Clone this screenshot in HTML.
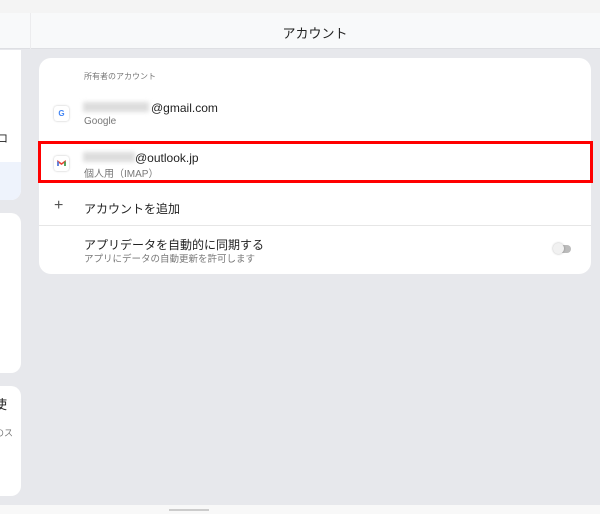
<!DOCTYPE html>
<html><head><meta charset="utf-8"><style>
*{margin:0;padding:0;box-sizing:border-box}
body{width:600px;height:514px;overflow:hidden;background:#e7e8ec;font-family:"Liberation Sans","Noto Sans CJK JP",sans-serif;position:relative}
.abs{position:absolute}
.t{color:#222}
.s{color:#777}
</style></head><body>
<div class="abs" style="left:0;top:0;width:600px;height:13px;background:#f4f4f4"></div>
<div class="abs" style="left:0;top:13px;width:600px;height:36px;background:#f8f9fa;border-bottom:1px solid #dedfe3"></div>
<div class="abs" style="left:30px;top:13px;width:1px;height:36px;background:#ececee"></div>
<div class="abs t" style="left:0;top:23px;width:630px;text-align:center;font-size:13px">アカウント</div>
<!-- left cards -->
<div class="abs" style="left:0;top:50px;width:21px;height:150px;background:#fff;border-radius:0 0 10px 0;overflow:hidden">
 <div class="abs t" style="left:-3px;top:80px;font-size:11px">ロ</div>
 <div class="abs" style="left:0;top:112px;width:21px;height:38px;background:#eef3fc"></div>
</div>
<div class="abs" style="left:0;top:213px;width:21px;height:160px;background:#fff;border-radius:0 10px 10px 0"></div>
<div class="abs" style="left:0;top:386px;width:21px;height:110px;background:#fff;border-radius:0 10px 10px 0;overflow:hidden">
 <div class="abs t" style="left:-6px;top:8px;font-size:13px">使</div>
 <div class="abs s" style="left:-5px;top:40px;font-size:9px">のス</div>
</div>
<!-- main card -->
<div class="abs" style="left:39px;top:58px;width:552px;height:216px;background:#fff;border-radius:12px">
 <div class="abs s" style="left:45px;top:13px;font-size:8px">所有者のアカウント</div>
 <div class="abs" style="left:15px;top:48px;width:15px;height:15px;border-radius:3px;box-shadow:0 0 2px rgba(0,0,0,.25);background:#fff;font-size:8px;font-weight:bold;color:#4285f4;text-align:center;line-height:15px">G</div>
 <div class="abs" style="left:44px;top:44px;width:66px;height:10px;background:#ddd;filter:blur(2px)"></div>
 <div class="abs t" style="left:112px;top:43px;font-size:12px">@gmail.com</div>
 <div class="abs s" style="left:45px;top:58px;font-size:10px">Google</div>
 <div class="abs" style="left:15px;top:98px;width:15px;height:15px;border-radius:3px;box-shadow:0 0 2px rgba(0,0,0,.25);background:#fff">
  <svg width="15" height="15" viewBox="0 0 15 15"><path d="M4 10V5.5L7.5 8 11 5.5V10" fill="none" stroke="#ea4335" stroke-width="1.6"/><path d="M4 5.5V10" stroke="#4285f4" stroke-width="1.6"/><path d="M11 5.5V10" stroke="#34a853" stroke-width="1.6"/></svg>
 </div>
 <div class="abs" style="left:44px;top:94px;width:52px;height:10px;background:#ddd;filter:blur(2px)"></div>
 <div class="abs t" style="left:96px;top:93px;font-size:12px">@outlook.jp</div>
 <div class="abs s" style="left:45px;top:107px;font-size:10px">個人用（IMAP）</div>
 <div class="abs" style="left:15px;top:139px;font-size:16px;color:#555">+</div>
 <div class="abs t" style="left:45px;top:142px;font-size:12px">アカウントを追加</div>
 <div class="abs" style="left:0;top:167px;width:552px;height:1px;background:#e6e6e6"></div>
 <div class="abs t" style="left:45px;top:178px;font-size:12px">アプリデータを自動的に同期する</div>
 <div class="abs s" style="left:45px;top:193px;font-size:9.5px">アプリにデータの自動更新を許可します</div>
 <div class="abs" style="left:516px;top:187px;width:16px;height:8px;border-radius:4px;background:#bbb"></div>
 <div class="abs" style="left:514px;top:185px;width:11px;height:11px;border-radius:50%;background:#f1f1f1;box-shadow:0 0 2px rgba(0,0,0,.3)"></div>
</div>
<div class="abs" style="left:38px;top:141px;width:555px;height:42px;border:3px solid #f00"></div>
<!-- bottom bar -->
<div class="abs" style="left:0;top:505px;width:600px;height:9px;background:#f8f8f8"></div>
<div class="abs" style="left:169px;top:509px;width:40px;height:2px;background:#ccc"></div>
</body></html>
